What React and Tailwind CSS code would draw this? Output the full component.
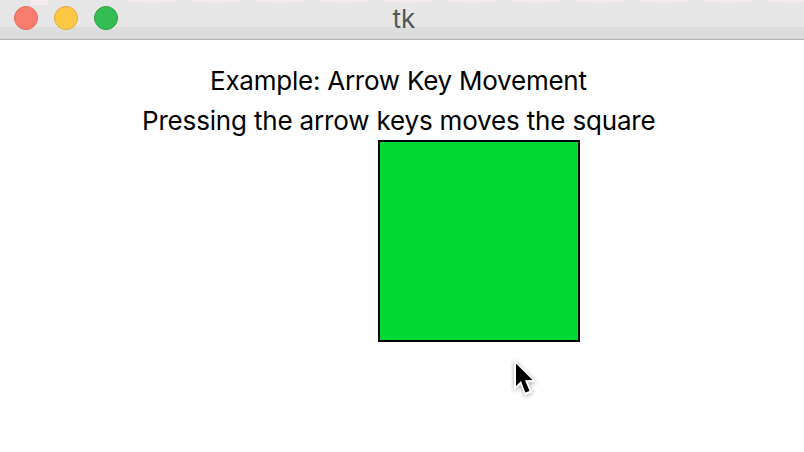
import React from "react";

function TitleBar() {
  return (
    <header className="relative flex h-10 shrink-0 flex-col bg-[#e6e6e6]">
      <div className="h-[27px] w-full" />
      <div className="h-[11px] w-full bg-[#dddddd]" />
      <div className="h-px w-full bg-[#d0d0d0]" />
      <div className="h-px w-full bg-[#b9b9b9]" />
      <div className="absolute left-[128px] right-0 top-0 h-[2px] bg-[repeating-linear-gradient(90deg,#f3eaec_0px,#f3eaec_48px,#e6e6e6_48px,#e6e6e6_64px)]" />
      <div className="absolute left-[144px] right-0 top-[2px] h-px bg-[repeating-linear-gradient(90deg,#f0e8ea_0px,#f0e8ea_16px,#e6e6e6_16px,#e6e6e6_64px)]" />
      <div className="absolute left-[30px] top-0 h-[5px] w-[18px] bg-[#f3eaec]" />
      <div className="absolute left-[14px] top-[6px] flex gap-4">
        <span className="size-6 rounded-full border border-[#e9695b] bg-[#f87c6d]" />
        <span className="size-6 rounded-full border border-[#e5ab3c] bg-[#fec844]" />
        <span className="size-6 rounded-full border border-[#2ba444] bg-[#34bd52]" />
      </div>
      <h1 className="absolute inset-x-0 top-[3px] pl-[4px] text-center text-[26px] leading-8 text-[#50585a]">
        tk
      </h1>
    </header>
  );
}

function Cursor() {
  return (
    <svg
      className="absolute left-[508px] top-[356px] drop-shadow-[0_1px_2px_rgba(0,0,0,0.35)]"
      width="34"
      height="46"
      viewBox="508 356 34 46"
    >
      <path
        d="M514 359.5 L514 390.5 L520.5 384.5 L525 395.5 L532 392.5 L528 382.5 L536.5 382 Z"
        fill="#fff"
      />
      <path
        d="M516 363.5 L516 386 L521 381 L525.3 392.5 L529.5 391 L525 380.3 L532.5 380 Z"
        fill="#000"
      />
    </svg>
  );
}

export default function App() {
  return (
    <div className="relative flex h-[452px] w-[804px] flex-col overflow-hidden bg-white font-['Inter','Liberation_Sans',sans-serif]">
      <TitleBar />
      <main className="flex flex-col pt-[21px] text-[26px] leading-10 text-black">
        <p className="ml-[210px] whitespace-nowrap tracking-[-0.24px]">
          Example: Arrow Key Movement
        </p>
        <p className="ml-[142px] whitespace-nowrap tracking-[-0.17px]">
          Pressing the arrow keys moves the square
        </p>
        <div className="-mt-px ml-[378px] size-[202px] border-2 border-black bg-[#00d931]" />
      </main>
      <Cursor />
    </div>
  );
}
